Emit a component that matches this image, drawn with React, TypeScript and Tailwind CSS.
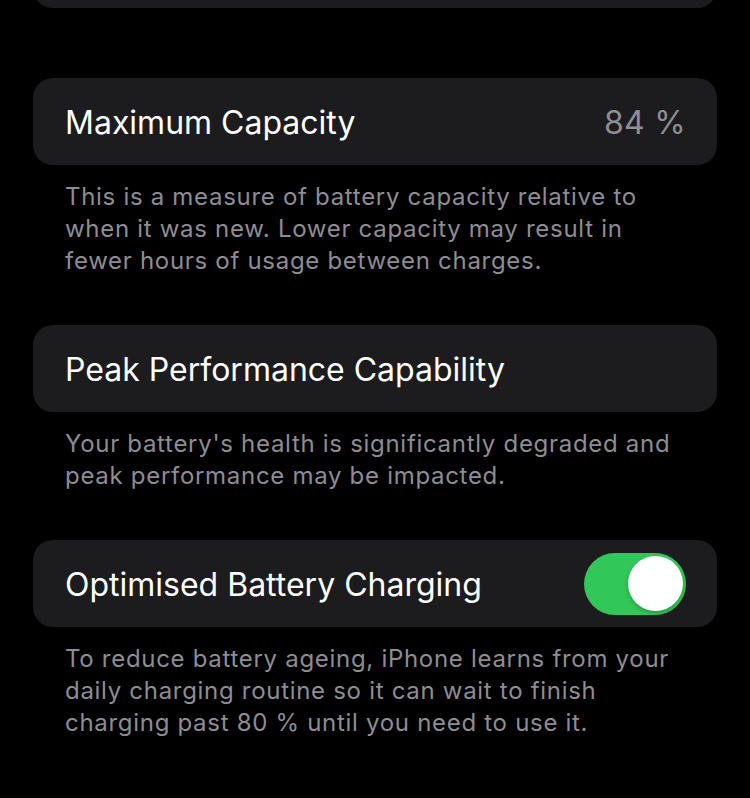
const Row = ({ title, value, toggle }: { title: string; value?: string; toggle?: boolean }) => {
  return (
    <div className="flex items-center justify-between h-[87px] bg-[#1c1c1e] rounded-[20px] pl-[32px] pr-[31px]">
      <span className="text-[32px] text-white tracking-[0px] pt-[2px]">{title}</span>
      {value && <span className="text-[32px] text-[#8e8e93] tracking-[0.3px] pt-[2px]">{value}</span>}
      {toggle && (
        <div className="w-[102px] h-[62px] rounded-full bg-[#32c759] flex items-center justify-end pr-[3px]">
          <div className="w-[55px] h-[55px] rounded-full bg-white shadow-[0_2px_4px_rgba(0,0,0,0.25)]" />
        </div>
      )}
    </div>
  );
};

const Note = ({ children }: { children: string }) => {
  return (
    <p className="px-[32px] pt-[16px] text-[24px] leading-[32px] tracking-[0.7px] text-[#8d8d93]">{children}</p>
  );
};

export default function App() {
  return (
    <div
      className="min-h-[798px] bg-black px-[33px] overflow-hidden"
      style={{ fontFamily: "Inter, 'Noto Sans', sans-serif" }}
    >
      <div className="h-[88px] -mt-[80px] bg-[#1c1c1e] rounded-[20px]" />

      <div className="mt-[70px]">
        <Row title="Maximum Capacity" value="84 %" />
        <Note>
          This is a measure of battery capacity relative to when it was new. Lower capacity may result in fewer hours of usage between charges.
        </Note>
      </div>

      <div className="mt-[48px]">
        <Row title="Peak Performance Capability" />
        <Note>Your battery's health is significantly degraded and peak performance may be impacted.</Note>
      </div>

      <div className="mt-[48px]">
        <Row title="Optimised Battery Charging" toggle />
        <Note>
          To reduce battery ageing, iPhone learns from your daily charging routine so it can wait to finish charging past 80 % until you need to use it.
        </Note>
      </div>
    </div>
  );
}
